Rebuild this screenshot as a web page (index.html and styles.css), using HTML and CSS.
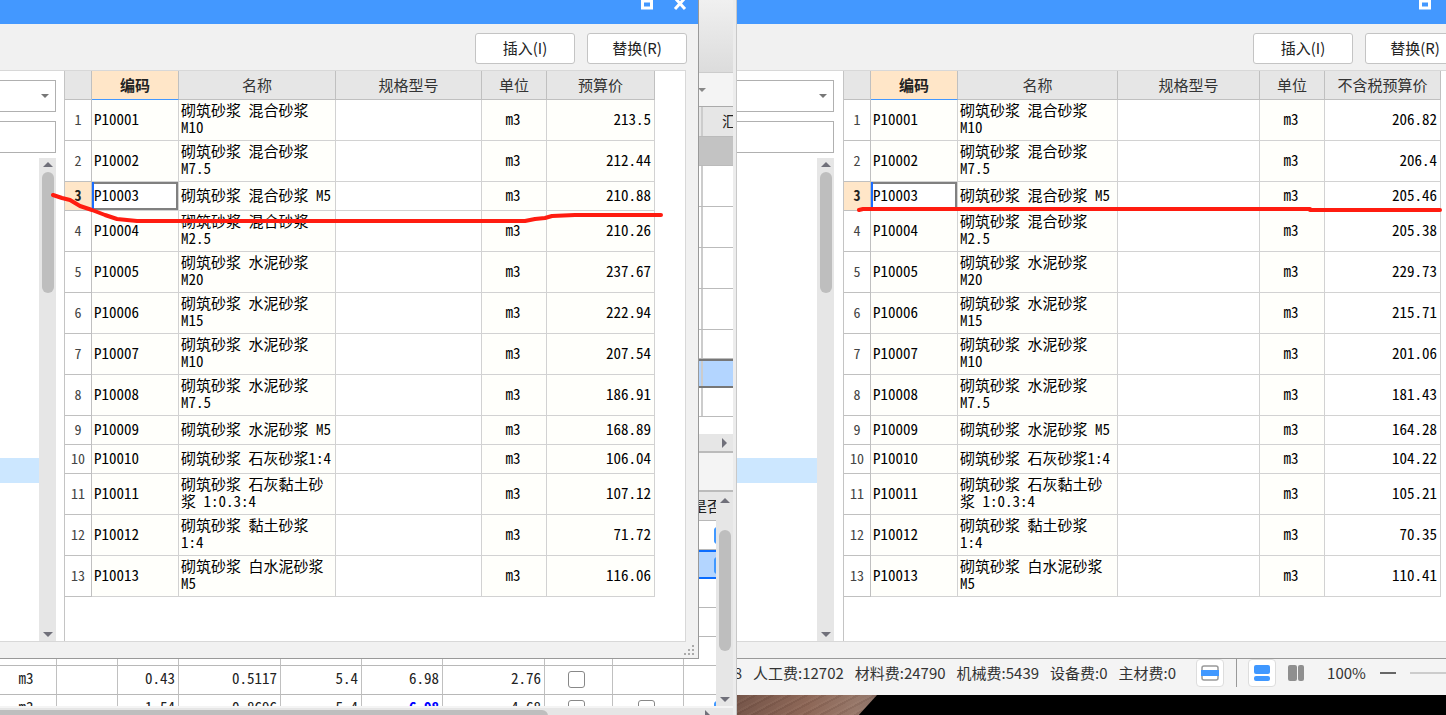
FILE: index.html
```html
<!DOCTYPE html>
<html lang="zh-CN">
<head>
<meta charset="utf-8">
<title>砂浆预算价</title>
<link rel="stylesheet" href="styles.css">
</head>
<body>
<main class="screen">
  <section class="pane pane-left">
    <div class="app">
      <div class="ribbon"></div>
      <div class="app-tools"><span class="caret"></span></div>
      <div class="upper">
        <div class="strip strip-head"><span class="strip-cell">汇</span></div>
        <div class="strip strip-gray"></div>
        <div class="strip tall"><span class="strip-cell"></span></div>
        <div class="strip tall"><span class="strip-cell"></span></div>
        <div class="strip tall"><span class="strip-cell"></span></div>
        <div class="strip tall"><span class="strip-cell"></span></div>
        <div class="strip"><span class="strip-cell"></span></div>
        <div class="strip strip-active"><span class="strip-cell"></span></div>
        <div class="strip"><span class="strip-cell"></span></div>
      </div>
      <div class="hscroll"><span class="tri tri-right"></span></div>
      <div class="app-tabs"></div>
      <div class="lower">
        <div class="lower-view">
          <table class="detail">
            <colgroup><col class="d1"><col class="d2"><col class="d3"><col class="d4"><col class="d5"><col class="d5"><col class="d4"><col class="d6"><col class="d7"><col class="d7"></colgroup>
            <thead><tr><th></th><th></th><th></th><th></th><th></th><th></th><th></th><th></th><th></th><th class="flag">是否</th></tr></thead>
            <tbody>
              <tr><td></td><td></td><td></td><td></td><td></td><td></td><td></td><td></td><td></td><td class="flag-box"><input type="checkbox" class="box on" aria-label="是否" checked></td></tr>
              <tr class="picked"><td></td><td></td><td></td><td></td><td></td><td></td><td></td><td></td><td></td><td class="flag-box"><input type="checkbox" class="box on" aria-label="是否" checked></td></tr>
              <tr><td></td><td></td><td></td><td></td><td></td><td></td><td></td><td></td><td></td><td></td></tr>
              <tr><td></td><td></td><td></td><td></td><td></td><td></td><td></td><td></td><td></td><td></td></tr>
              <tr><td></td><td></td><td></td><td></td><td></td><td></td><td></td><td class="mid"><input type="checkbox" class="box" aria-label="选择"></td><td></td><td></td></tr>
              <tr><td class="mid">m3</td><td></td><td>0.43</td><td>0.5117</td><td>5.4</td><td>6.98</td><td>2.76</td><td class="mid"><input type="checkbox" class="box" aria-label="选择"></td><td></td><td></td></tr>
              <tr><td class="mid">m3</td><td></td><td>1.54</td><td>0.8696</td><td>5.4</td><td class="edited">6.98</td><td>4.68</td><td class="mid"><input type="checkbox" class="box" aria-label="选择"></td><td class="mid"><input type="checkbox" class="box" aria-label="选择"></td><td class="flag-box"><input type="checkbox" class="box on" aria-label="是否" checked></td></tr>
            </tbody>
          </table>
        </div>
        <div class="vscroll"><span class="tri tri-up"></span><span class="thumb"></span><span class="tri tri-down"></span></div>
      </div>
      <div class="bottom-scroll"><span class="bottom-thumb"></span><span class="tri tri-right"></span></div>
    </div>

    <div class="dialog dialog-left">
      <header class="titlebar">
        <button class="win-btn" aria-label="最大化"><svg width="14" height="12" viewBox="0 0 14 12"><path d="M2.500 0v8h9V0M2 1h10" fill="none" stroke="#fff" stroke-width="3"/></svg></button>
        <button class="win-btn" aria-label="关闭"><svg width="14" height="12" viewBox="0 0 14 12"><path d="M2-2l10 11M12-2L2 9" fill="none" stroke="#fff" stroke-width="3"/></svg></button>
      </header>
      <div class="actions"><button class="btn">插入(I)</button><button class="btn">替换(R)</button></div>
      <div class="body">
        <aside class="side">
          <div class="combo"><select aria-label="定额库"></select></div>
          <input class="search" type="text" aria-label="查询">
          <div class="tree"><div class="tree-view"><div class="tree-active"></div></div><div class="vscroll"><span class="tri tri-up"></span><span class="thumb"></span><span class="tri tri-down"></span></div></div>
        </aside>
        <div class="sheet">
          <table class="prices">
            <colgroup><col class="c-no"><col class="c-code"><col class="c-name"><col class="c-spec"><col class="c-unit"><col class="c-price"></colgroup>
            <thead><tr><th></th><th class="sorted">编码</th><th>名称</th><th>规格型号</th><th>单位</th><th>预算价</th></tr></thead>
            <tbody>
              <tr class="two"><th>1</th><td>P10001</td><td>砌筑砂浆 混合砂浆 M10</td><td></td><td>m3</td><td>213.5</td></tr>
              <tr class="two"><th>2</th><td>P10002</td><td>砌筑砂浆 混合砂浆 M7.5</td><td></td><td>m3</td><td>212.44</td></tr>
              <tr class="current"><th>3</th><td>P10003</td><td>砌筑砂浆 混合砂浆 M5</td><td></td><td>m3</td><td>210.88</td></tr>
              <tr class="two"><th>4</th><td>P10004</td><td>砌筑砂浆 混合砂浆 M2.5</td><td></td><td>m3</td><td>210.26</td></tr>
              <tr class="two"><th>5</th><td>P10005</td><td>砌筑砂浆 水泥砂浆 M20</td><td></td><td>m3</td><td>237.67</td></tr>
              <tr class="two"><th>6</th><td>P10006</td><td>砌筑砂浆 水泥砂浆 M15</td><td></td><td>m3</td><td>222.94</td></tr>
              <tr class="two"><th>7</th><td>P10007</td><td>砌筑砂浆 水泥砂浆 M10</td><td></td><td>m3</td><td>207.54</td></tr>
              <tr class="two"><th>8</th><td>P10008</td><td>砌筑砂浆 水泥砂浆 M7.5</td><td></td><td>m3</td><td>186.91</td></tr>
              <tr><th>9</th><td>P10009</td><td>砌筑砂浆 水泥砂浆 M5</td><td></td><td>m3</td><td>168.89</td></tr>
              <tr><th>10</th><td>P10010</td><td>砌筑砂浆 石灰砂浆1:4</td><td></td><td>m3</td><td>106.04</td></tr>
              <tr class="two"><th>11</th><td>P10011</td><td>砌筑砂浆 石灰黏土砂浆 1:0.3:4</td><td></td><td>m3</td><td>107.12</td></tr>
              <tr class="two"><th>12</th><td>P10012</td><td>砌筑砂浆 黏土砂浆 1:4</td><td></td><td>m3</td><td>71.72</td></tr>
              <tr class="two"><th>13</th><td>P10013</td><td>砌筑砂浆 白水泥砂浆 M5</td><td></td><td>m3</td><td>116.06</td></tr>
            </tbody>
          </table>
        </div>
      </div>
      <footer class="dialog-foot"><svg width="11" height="11" viewBox="0 0 11 11" fill="#aaa"><path d="M8 0h2v2H8zM8 4h2v2H8zM8 8h2v2H8zM4 4h2v2H4zM4 8h2v2H4zM0 8h2v2H0z"/></svg></footer>
    </div>
    <svg class="marker" width="700" height="240" viewBox="0 0 700 240"><path d="M53 195L62 198 70 200 80 206 92 210 105 215 117 219 137 221H525L535 219 545 218 552 216 575 215H661"/></svg>
  </section>

  <section class="pane pane-right">
    <div class="dialog dialog-right">
      <header class="titlebar">
        <button class="win-btn" aria-label="最大化"><svg width="14" height="12" viewBox="0 0 14 12"><path d="M2.500 0v8h9V0M2 1h10" fill="none" stroke="#fff" stroke-width="3"/></svg></button>
        <button class="win-btn" aria-label="关闭"><svg width="14" height="12" viewBox="0 0 14 12"><path d="M2-2l10 11M12-2L2 9" fill="none" stroke="#fff" stroke-width="3"/></svg></button>
      </header>
      <div class="actions"><button class="btn">插入(I)</button><button class="btn">替换(R)</button></div>
      <div class="body">
        <aside class="side">
          <div class="combo"><select aria-label="定额库"></select></div>
          <input class="search" type="text" aria-label="查询">
          <div class="tree"><div class="tree-view"><div class="tree-active"></div></div><div class="vscroll"><span class="tri tri-up"></span><span class="thumb"></span><span class="tri tri-down"></span></div></div>
        </aside>
        <div class="sheet">
          <table class="prices net">
            <colgroup><col class="c-no"><col class="c-code"><col class="c-name"><col class="c-spec"><col class="c-unit"><col class="c-price"></colgroup>
            <thead><tr><th></th><th class="sorted">编码</th><th>名称</th><th>规格型号</th><th>单位</th><th>不含税预算价</th></tr></thead>
            <tbody>
              <tr class="two"><th>1</th><td>P10001</td><td>砌筑砂浆 混合砂浆 M10</td><td></td><td>m3</td><td>206.82</td></tr>
              <tr class="two"><th>2</th><td>P10002</td><td>砌筑砂浆 混合砂浆 M7.5</td><td></td><td>m3</td><td>206.4</td></tr>
              <tr class="current"><th>3</th><td>P10003</td><td>砌筑砂浆 混合砂浆 M5</td><td></td><td>m3</td><td>205.46</td></tr>
              <tr class="two"><th>4</th><td>P10004</td><td>砌筑砂浆 混合砂浆 M2.5</td><td></td><td>m3</td><td>205.38</td></tr>
              <tr class="two"><th>5</th><td>P10005</td><td>砌筑砂浆 水泥砂浆 M20</td><td></td><td>m3</td><td>229.73</td></tr>
              <tr class="two"><th>6</th><td>P10006</td><td>砌筑砂浆 水泥砂浆 M15</td><td></td><td>m3</td><td>215.71</td></tr>
              <tr class="two"><th>7</th><td>P10007</td><td>砌筑砂浆 水泥砂浆 M10</td><td></td><td>m3</td><td>201.06</td></tr>
              <tr class="two"><th>8</th><td>P10008</td><td>砌筑砂浆 水泥砂浆 M7.5</td><td></td><td>m3</td><td>181.43</td></tr>
              <tr><th>9</th><td>P10009</td><td>砌筑砂浆 水泥砂浆 M5</td><td></td><td>m3</td><td>164.28</td></tr>
              <tr><th>10</th><td>P10010</td><td>砌筑砂浆 石灰砂浆1:4</td><td></td><td>m3</td><td>104.22</td></tr>
              <tr class="two"><th>11</th><td>P10011</td><td>砌筑砂浆 石灰黏土砂浆 1:0.3:4</td><td></td><td>m3</td><td>105.21</td></tr>
              <tr class="two"><th>12</th><td>P10012</td><td>砌筑砂浆 黏土砂浆 1:4</td><td></td><td>m3</td><td>70.35</td></tr>
              <tr class="two"><th>13</th><td>P10013</td><td>砌筑砂浆 白水泥砂浆 M5</td><td></td><td>m3</td><td>110.41</td></tr>
            </tbody>
          </table>
        </div>
      </div>
      <footer class="dialog-foot"></footer>
    </div>
    <div class="status">
      <span class="cut">8</span><span>人工费:12702</span><span>材料费:24790</span><span>机械费:5439</span><span>设备费:0</span><span>主材费:0</span>
      <div class="views">
        <button class="view framed" aria-label="汇总栏"><svg width="18" height="16" viewBox="0 0 18 16"><rect x="1" y="1" width="16" height="14" rx="2" fill="#fff" stroke="#999" stroke-width="1.500"/><path d="M0 5h18v6H0z" fill="#4098ff"/></svg></button>
        <span class="divider"></span>
        <button class="view framed" aria-label="上下布局"><svg width="16" height="16" viewBox="0 0 16 16" fill="#4098ff"><rect width="16" height="9" rx="2"/><rect y="11" width="16" height="5" rx="2"/></svg></button>
        <button class="view" aria-label="左右布局"><svg width="16" height="16" viewBox="0 0 16 16" fill="#8f8f8f"><rect width="9" height="16" rx="2"/><rect x="10" width="6" height="16" rx="2"/></svg></button>
      </div>
      <span class="zoom">100%</span>
      <button class="minus" aria-label="缩小"><svg width="16" height="4" viewBox="0 0 16 4"><path d="M0 2h16" stroke="#666" stroke-width="2"/></svg></button>
      <span class="track"></span>
    </div>
    <div class="photo"><div class="wood"></div></div>
    <svg class="marker" width="709" height="240" viewBox="0 0 709 240"><path d="M122 210L126 209H573V210H703"/></svg>
  </section>
</main>
</body>
</html>
```

FILE: styles.css
```css
* { box-sizing: border-box; }

body {
  margin: 0;
  overflow: hidden;
  background: #fff;
  color: #222;
  font: 15px/20px "Noto Sans CJK SC", sans-serif;
}

button { padding: 0; border: 0; background: none; font: inherit; color: inherit; }

.screen {
  display: grid;
  grid-template-columns: 737fr 709fr;
  grid-template-rows: 100vh;
}

.pane { position: relative; overflow: hidden; min-width: 0; display: flex; flex-direction: column; }

/* application behind the left dialog */
.app {
  flex: 1;
  min-height: 0;
  display: flex;
  flex-direction: column;
  border-right: 1px solid #c8c8c8;
  padding-right: 3px;
  background: #ececec;
}
.ribbon { height: 73px; background: linear-gradient(#f0f0f0, #dcdcdc); border-bottom: 1px solid #ccc; }
.app-tools {
  height: 34px;
  display: flex;
  justify-content: flex-end;
  align-items: center;
  padding-right: 27px;
  background: #f4f4f4;
  border-bottom: 1px solid #aaa;
}
.caret { border: 4px solid transparent; border-top-color: #888; border-bottom: 0; }

.upper { height: 327px; background: #fff; }
.strip { height: 29px; display: flex; justify-content: flex-end; border-bottom: 1px solid #bbb; }
.strip.tall { height: 41px; }
.strip-cell { width: 32px; border-left: 2px solid #ccc; overflow: hidden; white-space: nowrap; }
.strip-head { height: 30px; background: #e6e6e6; }
.strip-head .strip-cell { padding: 4px 0 0 19px; }
.strip-gray { background: #c3c3c3; }
.strip-active { background: #b3d5ff; border-top: 2px solid #777; border-bottom: 2px solid #777; }

.hscroll {
  height: 19px;
  display: flex;
  justify-content: flex-end;
  align-items: center;
  padding-right: 6px;
  background: #e6e6e6;
  border-bottom: 2px solid #bbb;
}
.app-tabs { height: 39px; background: #f4f4f4; border-bottom: 2px solid #bbb; }

.tri { flex: none; border: 5px solid transparent; }
.tri-up { border-bottom-color: #70707a; border-top: 0; }
.tri-down { border-top-color: #70707a; border-bottom: 0; }
.tri-right { border-left-color: #70707a; border-right: 0; }

.lower { flex: 1; min-height: 0; display: flex; background: #fff; }
.lower-view { flex: 1; min-width: 0; overflow: hidden; }
.detail {
  width: 752px;
  border-collapse: separate;
  border-spacing: 0;
  table-layout: fixed;
  font-family: "Noto Sans Mono CJK SC", "Noto Sans CJK SC", monospace;
}
.d1 { width: 57px; }
.d2 { width: 61px; }
.d3 { width: 61px; }
.d4 { width: 102px; }
.d5 { width: 81px; }
.d6 { width: 68px; }
.d7 { width: 71px; }
.detail th, .detail td {
  height: 29px;
  padding: 0 3px 4px 0;
  border-right: 1px solid #c0c0c0;
  border-bottom: 1px solid #b8b8b8;
  text-align: right;
  line-height: 20px;
}
.detail th { background: #e6e6e6; font-weight: 400; }
.detail .flag { padding: 0 0 0 8px; text-align: left; }
.detail .flag-box { padding: 0 0 2px 30px; text-align: left; }
.detail .mid { padding: 0 4px 4px 0; text-align: center; }
.detail .edited { color: #00f; font-weight: 700; }
.detail .picked td { background: #b3d5ff; border-top: 2px solid #0a6cff; border-bottom: 2px solid #0a6cff; }
.box {
  appearance: none;
  display: inline-block;
  width: 17px;
  height: 17px;
  margin: 0;
  vertical-align: middle;
  background: #fff;
  border: 1px solid #888;
  border-radius: 3px;
}
.box.on { background: #4098ff; border-color: #4098ff; }

.vscroll {
  flex: none;
  width: 17px;
  display: flex;
  flex-direction: column;
  align-items: center;
  padding: 4px 0;
  background: #e6e6e6;
}
.thumb { width: 12px; height: 121px; margin-top: 5px; border-radius: 6px; background: #bebebe; }
.vscroll .tri-down { margin-top: auto; }
.lower .vscroll { padding-top: 6px; }
.lower .thumb { margin-top: 27px; }

.bottom-scroll { height: 9px; display: flex; justify-content: space-between; background: #e6e6e6; border-top: 2px solid #f4f4f4; overflow: hidden; padding: 2px 23px 0 0; }
.bottom-thumb { width: 548px; height: 12px; border-radius: 0 6px 0 0; background: #bebebe; }

/* dialogs */
.dialog { display: flex; flex-direction: column; background: #f1f1f1; border-right: 1px solid #999; border-bottom: 1px solid #999; }
.dialog-left { position: absolute; inset: 0 38px 56px 0; }
.dialog-right { flex: 1; min-height: 0; margin-right: -31px; }

.titlebar { height: 24px; display: flex; justify-content: flex-end; gap: 19px; padding-right: 11px; background: #4398ff; }
.win-btn { width: 14px; height: 12px; display: flex; }
.actions { height: 46px; display: flex; justify-content: flex-end; align-items: center; gap: 12px; padding: 2px 11px 0 0; }
.btn { width: 100px; height: 31px; background: #fff; border: 1px solid #c4c4c4; border-radius: 3px; }

.body { flex: 1; min-height: 0; display: flex; margin-right: 12px; background: #fff; border: 1px solid #d8d8d8; border-left: 0; }
.side { flex: none; width: 64px; display: flex; flex-direction: column; padding: 9px 8px 0 0; }
.dialog-right .side { width: 106px; padding-right: 9px; }
.combo { position: relative; height: 32px; margin-bottom: 9px; }
.combo::after { content: ""; position: absolute; right: 7px; top: 14px; border: 4px solid transparent; border-top-color: #777; border-bottom: 0; }
.combo select, .search {
  appearance: none;
  display: block;
  width: 100%;
  height: 32px;
  margin: 0;
  padding: 0;
  background: #fff;
  border: 1px solid #b0b0b0;
  border-left: 0;
  border-radius: 0;
}
.tree { flex: 1; min-height: 0; display: flex; margin-top: 5px; }
.tree-view { flex: 1; padding-top: 300px; }
.tree-active { height: 25px; background: #cce7ff; }

.sheet { flex: 1; min-width: 0; border-left: 1px solid #c4c4c4; }
.prices {
  width: 590px;
  border-collapse: separate;
  border-spacing: 0;
  table-layout: fixed;
  color: #000;
  font-family: "Noto Sans Mono CJK SC", "Noto Sans CJK SC", monospace;
  line-height: 17px;
}
.prices.net { width: 597px; }
.c-no { width: 27px; }
.c-code { width: 87px; }
.c-name { width: 157px; }
.c-spec { width: 146px; }
.c-unit { width: 65px; }
.c-price { width: 108px; }
.net .c-name { width: 160px; }
.net .c-spec { width: 142px; }
.net .c-price { width: 116px; }

.prices th, .prices td { height: 29px; padding: 0 2px 4px; border-right: 1px solid #d2d2d2; border-bottom: 1px solid #d2d2d2; }
.prices .two th, .prices .two td { height: 41px; }
.prices thead th { padding-bottom: 2px; background: #e6e6e6; border-color: #c0c0c0; color: #333; font-family: "Noto Sans CJK SC", sans-serif; font-weight: 400; }
.prices thead .sorted { background: #ffe6c8; border-bottom-color: #4398ff; color: #222; font-weight: 700; }
.prices tbody th { padding: 0 0 1px; border-color: #c0c0c0; color: #444; font-size: 14px; font-weight: 400; }
.prices td { background: #fffffb; text-align: left; }
.prices td:nth-child(4) { background: #fff; }
.prices td:nth-child(5) { padding: 0 2px 4px 0; text-align: center; }
.prices td:nth-child(6) { padding-right: 3px; text-align: right; }
.net td:nth-child(6) { background: #fff; }
.prices .current th { background: #ffe6c8; color: #222; font-weight: 700; }
.prices .current td:nth-child(2) { background: #fff; box-shadow: inset 2px 0 #1a6dff, inset 0 0 0 2px #808080; }

.dialog-foot { height: 16px; display: flex; justify-content: flex-end; align-items: center; padding-right: 3px; }

/* status bar and desktop */
.status { height: 36px; display: flex; align-items: center; gap: 11px; padding-bottom: 8px; background: #f4f4f4; overflow: hidden; white-space: nowrap; color: #333; }
.cut { width: 5px; display: flex; justify-content: flex-end; }
.views { display: flex; align-items: center; gap: 6px; margin-left: 9px; }
.view { width: 28px; height: 28px; display: grid; place-items: center; }
.framed { background: #fff; border: 1px solid #ddd; border-radius: 4px; }
.divider { width: 1px; height: 28px; margin: 0 5px 0 6px; background: #999; }
.zoom { margin-left: 6px; }
.minus { display: flex; margin-left: 3px; }
.track { flex: 1; height: 2px; margin-left: 3px; background: #ccc; }
.photo { height: 20px; background: #000; }
.wood {
  width: 140px;
  height: 20px;
  clip-path: polygon(0 0, 100% 0, 87% 100%, 0 100%);
  background:
    repeating-linear-gradient(152deg, rgba(60, 30, 20, 0.1) 0 2px, transparent 2px 6px, rgba(220, 190, 170, 0.06) 6px 8px),
    linear-gradient(100deg, #76564a, #8d6757 50%, #97786a 85%, #8a7066);
}

/* red pen marks */
.marker { position: absolute; left: 0; top: 0; pointer-events: none; fill: none; stroke: #ff1c10; stroke-width: 4px; stroke-linecap: round; stroke-linejoin: round; }
```
